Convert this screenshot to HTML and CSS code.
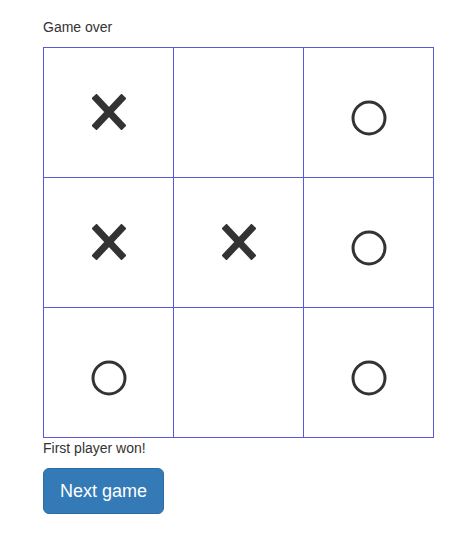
FILE: index.html
```html
<!DOCTYPE html>
<html>
<head>
<meta charset="utf-8">
<link rel="stylesheet" href="styles.css">
</head>
<body>
<div class="game">
  <div class="status">Game over</div>
  <div class="board">
    <div class="cell"><svg class="x" viewBox="0 0 34 36"><path d="M2 2 L32 34 M32 2 L2 34"/></svg></div>
    <div class="cell"></div>
    <div class="cell"><svg class="o" viewBox="0 0 36 36"><circle cx="18" cy="18" r="16"/></svg></div>
    <div class="cell"><svg class="x" viewBox="0 0 34 36"><path d="M2 2 L32 34 M32 2 L2 34"/></svg></div>
    <div class="cell"><svg class="x" viewBox="0 0 34 36"><path d="M2 2 L32 34 M32 2 L2 34"/></svg></div>
    <div class="cell"><svg class="o" viewBox="0 0 36 36"><circle cx="18" cy="18" r="16"/></svg></div>
    <div class="cell"><svg class="o" viewBox="0 0 36 36"><circle cx="18" cy="18" r="16"/></svg></div>
    <div class="cell"></div>
    <div class="cell"><svg class="o" viewBox="0 0 36 36"><circle cx="18" cy="18" r="16"/></svg></div>
  </div>
  <div class="result">First player won!</div>
  <button class="btn">Next game</button>
</div>
</body>
</html>
```
FILE: styles.css
```css
html, body {
  margin: 0;
  padding: 0;
  background: #fff;
}
body {
  font-family: "Liberation Sans", Arial, sans-serif;
  font-size: 14px;
  color: #333;
}
.game {
  padding: 17px 0 0 43px;
}
.status {
  line-height: 20px;
  height: 20px;
  margin-bottom: 10px;
}
.board {
  display: grid;
  grid-template-columns: repeat(3, 129px);
  grid-auto-rows: 129px;
  gap: 1px;
  background: #5a5ad8;
  border: 1px solid #5a5ad8;
  width: 389px;
}
.cell {
  background: #fff;
  display: flex;
  align-items: center;
  justify-content: center;
}
.x {
  width: 34px;
  height: 36px;
  margin-top: -1px;
}
.x path {
  stroke: #333;
  stroke-width: 7;
  stroke-linecap: butt;
  fill: none;
}
.o {
  width: 36px;
  height: 36px;
  margin-top: 10px;
}
.o circle {
  stroke: #333;
  stroke-width: 3;
  fill: none;
}
.result {
  line-height: 20px;
}
.btn {
  margin-top: 10px;
  width: 121px;
  height: 46px;
  background: #337ab7;
  border: 1px solid #2e6da4;
  border-radius: 6px;
  color: #fff;
  font-family: "Liberation Sans", Arial, sans-serif;
  font-size: 18px;
  padding: 0;
}
```
